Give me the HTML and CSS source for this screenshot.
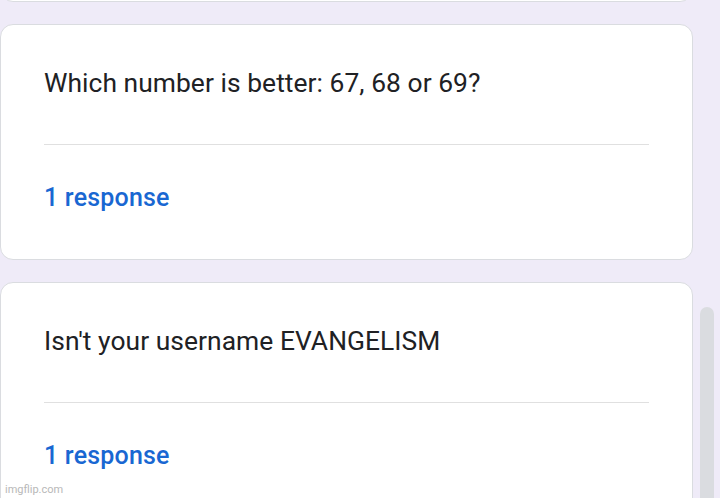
FILE: index.html
```html
<!DOCTYPE html>
<html lang="en">
<head>
    <meta charset="UTF-8">
    <meta name="viewport" content="width=device-width, initial-scale=1.0">
    <title>Responses</title>
    <link rel="stylesheet" href="styles.css">
</head>
<body>
    <div class="page">
        <div class="feed">
            <div class="card card-prev"></div>

            <div class="card">
                <p class="question">Which number is better: 67, 68 or 69?</p>
                <hr class="divider">
                <p class="count">1 response</p>
            </div>

            <div class="card">
                <p class="question">Isn't your username EVANGELISM</p>
                <hr class="divider">
                <p class="count">1 response</p>
            </div>
        </div>

        <div class="scroll-track">
            <div class="scroll-thumb"></div>
        </div>
    </div>

    <span class="watermark">imgflip.com</span>
</body>
</html>
```

FILE: styles.css
```css
body {
    font-family: Roboto, 'Noto Sans', sans-serif;
    margin: 0;
    padding: 0;
    background: #efebf8;
    height: 498px;
    overflow: hidden;
}
.page {
    display: flex;
    height: 498px;
}
.feed {
    width: 693px;
    display: flex;
    flex-direction: column;
    gap: 22px;
    margin-top: -234px;
}
.card {
    box-sizing: border-box;
    background: #fff;
    border: 1px solid #dadce0;
    border-radius: 13px;
    padding: 0 43px;
    height: 236px;
    flex-shrink: 0;
}
.question {
    margin: 0;
    padding-top: 43px;
    font-size: 26.4px;
    line-height: 30px;
    color: #202124;
    letter-spacing: 0.05px;
}
.divider {
    border: none;
    border-top: 1px solid #e0e0e0;
    margin: 46px 0 0;
    width: 605px;
}
.count {
    margin: 38px 0 0;
    font-size: 25px;
    line-height: 30px;
    font-weight: 500;
    letter-spacing: 0.2px;
    color: #1967d2;
}
.scroll-track {
    flex: 1;
    display: flex;
    justify-content: center;
    padding-top: 307px;
    padding-left: 1px;
}
.scroll-thumb {
    width: 14px;
    background: #dadce0;
    border-radius: 7px 7px 0 0;
}
.watermark {
    position: absolute;
    left: 5px;
    bottom: 2px;
    font-size: 11px;
    color: #b8b8b8;
}
```
